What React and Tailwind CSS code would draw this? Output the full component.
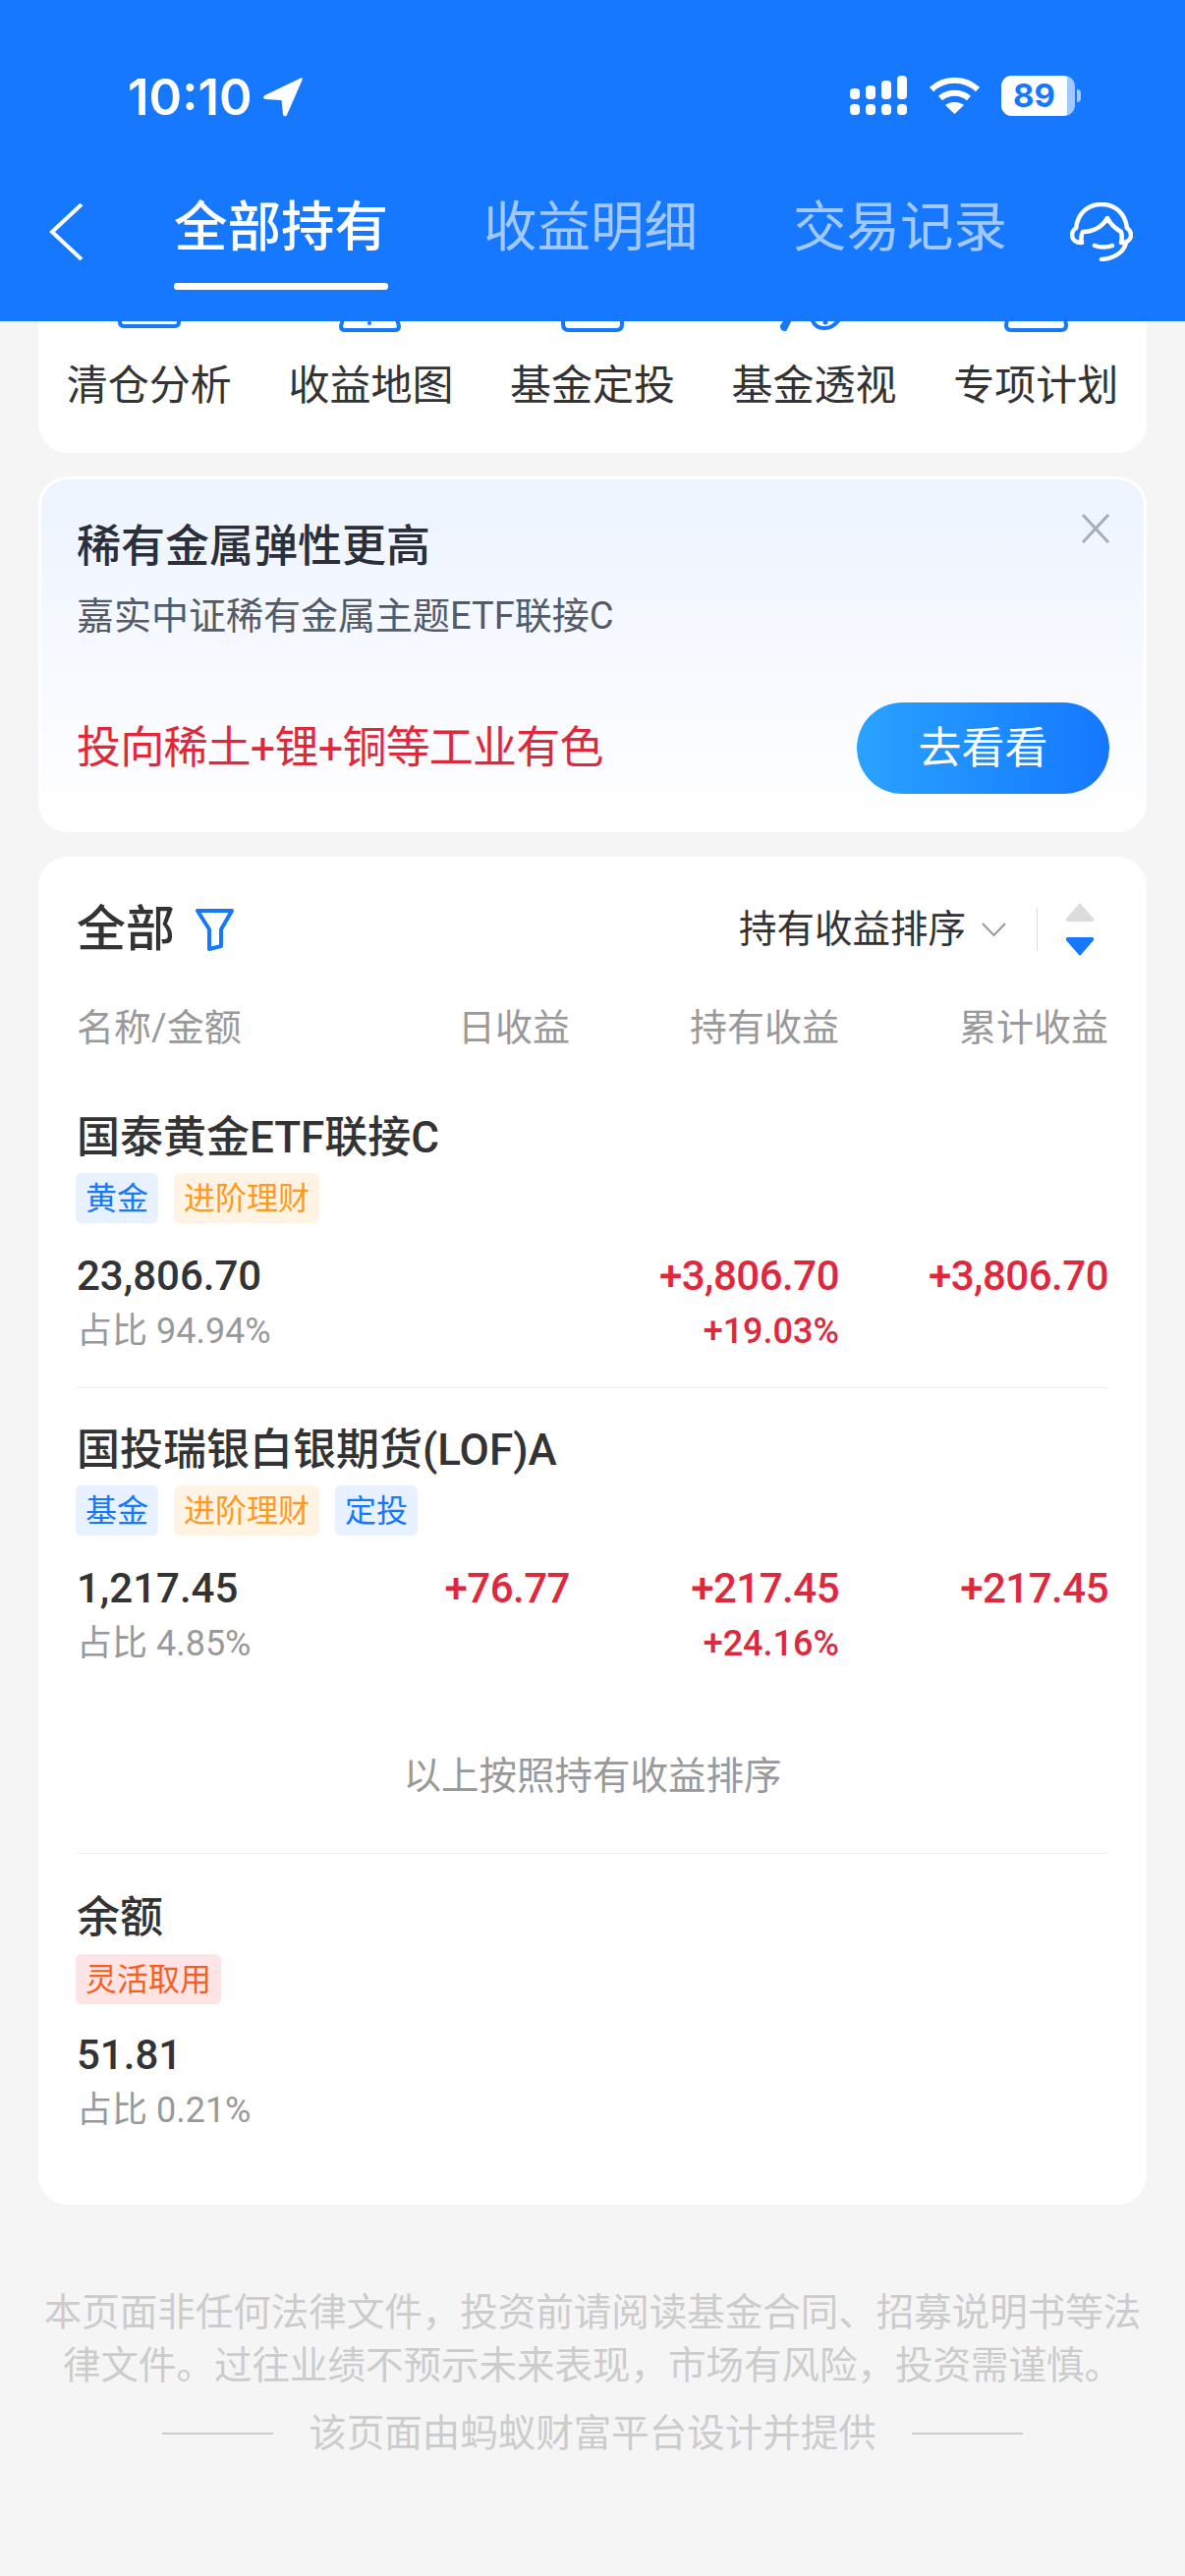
import React from 'react';

const tools = ['清仓分析', '收益地图', '基金定投', '基金透视', '专项计划'];

const holdings = [
  {
    name: '国泰黄金ETF联接C',
    tags: [['黄金', 'blue'], ['进阶理财', 'orange']],
    amount: '23,806.70',
    share: '占比 94.94%',
    day: '',
    hold: '+3,806.70',
    holdPct: '+19.03%',
    total: '+3,806.70',
  },
  {
    name: '国投瑞银白银期货(LOF)A',
    tags: [['基金', 'blue'], ['进阶理财', 'orange'], ['定投', 'blue']],
    amount: '1,217.45',
    share: '占比 4.85%',
    day: '+76.77',
    hold: '+217.45',
    holdPct: '+24.16%',
    total: '+217.45',
  },
];

function ToolStub({ index }) {
  return (
    <svg className="mx-auto block h-[11px] w-[72px]" viewBox="0 0 72 11" fill="none" stroke="#1677ff" strokeWidth="4">
      {index === 0 && <path d="M6 -2 V1 Q6 5 11 5 H61 Q66 5 66 1 V-2" />}
      {index === 1 && (
        <>
          <path d="M8 -2 L6 5 Q6 9 10 9 H61 Q65 9 65 5 L63 -2" />
          <circle cx="35" cy="2" r="2" fill="#1677ff" stroke="none" />
        </>
      )}
      {index === 2 && <path d="M6 -2 V3 Q6 9 12 9 H60 Q66 9 66 3 V-2" />}
      {index === 3 && (
        <>
          <path d="M8 -2 L3 5 Q3 8 6 8 L11 -2" />
          <path d="M33 -3 C35 4 40 7 46 7 C53 7 58 3 62 -3" />
          <circle cx="47" cy="1" r="2.5" fill="#1677ff" stroke="none" />
        </>
      )}
      {index === 4 && <path d="M7 -2 L6 4 Q6 9 11 9 H62 Q67 9 67 4 L66 -2" />}
    </svg>
  );
}

function Tag({ color, children }) {
  const styles = {
    blue: 'bg-[#e7f1ff] text-[#1677ff]',
    orange: 'bg-[#fff3e3] text-[#ff9a1f]',
    red: 'bg-[#ffe4e6] text-[#f5601e]',
  };
  return (
    <span className={`flex h-[51px] items-center rounded-[6px] px-[10px] text-[32px] leading-none ${styles[color]}`}>
      {children}
    </span>
  );
}

function Holding({ name, tags, amount, share, day, hold, holdPct, total }) {
  return (
    <div>
      <div className="h-[60px] text-[44px] font-medium leading-[62px] text-[#333333]">{name}</div>
      <div className="-ml-px mt-[7px] flex h-[51px] gap-[16px]">
        {tags.map((t) => (
          <Tag key={t[0]} color={t[1]}>{t[0]}</Tag>
        ))}
      </div>
      <div className="mt-[23px] grid h-[60px] grid-cols-[250px_252px_274px_274px] text-[42px] font-medium leading-[61px] tracking-[-0.5px] text-[#e0283c]">
        <div className="tracking-normal text-[#333333]">{amount}</div>
        <div className="text-right">{day}</div>
        <div className="text-right">{hold}</div>
        <div className="text-right">{total}</div>
      </div>
      <div className="mt-[2px] grid h-[50px] grid-cols-[502px_274px_274px] text-[36px] leading-[50px]">
        <span className="text-[#999999]">{share}</span>
        <span className="text-right font-medium text-[#e0283c]">{holdPct}</span>
      </div>
    </div>
  );
}

export default function App() {
  return (
    <div className="h-[2622px] w-[1206px] overflow-hidden bg-[#f5f5f5] font-['Roboto','Noto_Sans_CJK_SC',sans-serif]">
      {/* header */}
      <div className="h-[327px] bg-[#1677ff] text-white">
        <div className="flex h-[198px] items-start justify-between pl-[130px] pr-[106px] pt-[74px]">
          <div className="flex items-center gap-[11px]">
            <span className="font-['Inter'] text-[51px] font-semibold leading-[50px]">10:10</span>
            <svg className="h-[40px] w-[40px]" viewBox="0 0 40 40" fill="#ffffff">
              <path d="M38 0.5 C39.5 0 40 1 39.5 2.5 L24 38 C23 40 20.500 39.500 20 37.500 L18.500 23 L2 22 C0 21.500 -0.500 19 1.500 18 Z" />
            </svg>
          </div>
          <div className="flex items-center gap-[22px] pt-[2px]">
            <svg className="h-[42px] w-[60px]" viewBox="0 0 60 42" fill="#ffffff">
              <rect x="1" y="14" width="10" height="11" rx="4" />
              <rect x="17" y="11" width="10" height="14" rx="4" />
              <rect x="33" y="6" width="10" height="19" rx="4" />
              <rect x="49" y="1" width="10" height="24" rx="4" />
              <rect x="1" y="30" width="10" height="11" rx="4" />
              <rect x="17" y="30" width="10" height="11" rx="4" />
              <rect x="33" y="30" width="10" height="11" rx="4" />
              <rect x="49" y="30" width="10" height="11" rx="4" />
            </svg>
            <svg className="h-[38px] w-[51px]" viewBox="0 0 51 38" fill="none" stroke="#ffffff" strokeWidth="6">
              <path d="M2 13 C15 0.500 36 0.500 49 13" />
              <path d="M11 22 C19 15 32 15 40 22" />
              <path d="M25.500 38 L16 29 C21 25 30 25 35 29 Z" fill="#ffffff" stroke="none" />
            </svg>
            <div className="flex items-center">
              <div className="flex h-[41px] w-[75px] overflow-hidden rounded-[11px] bg-white/60">
                <div className="flex h-full w-[67px] items-center justify-center rounded-r-[3px] bg-white font-['Inter'] text-[33px] font-bold leading-none text-[#1677ff]">
                  89
                </div>
              </div>
              <div className="ml-[2px] h-[13px] w-[4px] rounded-r-full bg-white/60" />
            </div>
          </div>
        </div>
        <div className="flex items-start">
          <svg className="ml-[50px] mt-[9px] h-[58px] w-[36px]" viewBox="0 0 36 58" fill="none" stroke="#ffffff" strokeWidth="4">
            <path d="M33 1 L3 29 L33 57" />
          </svg>
          <div className="ml-[91px] flex gap-[97px] text-[54.500px] leading-[66px]">
            <div className="flex w-[218px] flex-col">
              <span className="font-medium">全部持有</span>
              <span className="mt-[24px] h-[7px] rounded-[3px] bg-white" />
            </div>
            <span className="w-[218px] text-white/60">收益明细</span>
            <span className="w-[218px] text-white/60">交易记录</span>
          </div>
          <svg className="ml-[64px] mt-[8px] h-[60px] w-[64px]" viewBox="0 0 64 60" fill="none" stroke="#ffffff" strokeWidth="4.500" strokeLinecap="round" strokeLinejoin="round">
            <path d="M6 26 C8 11 18 2 32 2 C46 2 56 11 58 26" />
            <path d="M6 26 C3 28 2 30 2 33 C2 38 6 41 12 41 C11 36 11 33 13 30 C22 30 32 26 38 16 C41 22 47 27 52 30 C53 34 53 37 52 41 C58 41 62 38 62 33 C62 30 61 28 58 26" />
            <path d="M25 44 C30 46 38 46 43 44" />
            <path d="M57 41 C55 50 46 57 32 58" />
          </svg>
        </div>
      </div>

      {/* shortcuts */}
      <div className="mx-[39px] grid grid-cols-5 rounded-b-[30px] bg-white pb-[43px]">
        {tools.map((label, i) => (
          <div key={label} className="text-center">
            <ToolStub index={i} />
            <div className="mt-[30px] h-[50px] text-[42px] leading-[50px] text-[#333333]">{label}</div>
          </div>
        ))}
      </div>

      {/* promo banner */}
      <div className="relative mx-[39px] mt-[24px] h-[362px] rounded-[30px] border-[3px] border-white bg-linear-to-b from-[#edf4fe] via-[#f6f9ff] to-white pl-[36px] pr-[35px]">
        <button className="absolute right-[34px] top-[35px]">
          <svg className="block h-[30px] w-[30px]" viewBox="0 0 30 30" fill="none" stroke="#a5adb8" strokeWidth="3">
            <path d="M2 1 L28 29 M28 1 L2 29" />
          </svg>
        </button>
        <div className="mt-[39px] h-[60px] text-[45px] font-medium leading-[60px] text-[#2a2f3a]">稀有金属弹性更高</div>
        <div className="mt-[15px] h-[50px] text-[38px] leading-[50px] text-[#555b66]">嘉实中证稀有金属主题ETF联接C</div>
        <div className="mt-[63px] flex items-center justify-between">
          <span className="text-[45px] leading-[62px] tracking-[-0.8px] text-[#e0283c]">投向稀土+锂+铜等工业有色</span>
          <span className="flex h-[93px] w-[257px] items-center justify-center rounded-full bg-linear-to-r from-[#2ba2ff] to-[#1677ff] text-[44px] leading-none text-white">
            去看看
          </span>
        </div>
      </div>

      {/* holdings */}
      <div className="mx-[39px] mt-[25px] rounded-[30px] bg-white pb-[71px] pl-[39px] pr-[39px] pt-[44px]">
        <div className="flex h-[60px] items-center">
          <span className="text-[50px] font-medium leading-[60px] text-[#333333]">全部</span>
          <svg className="ml-[20px] h-[46px] w-[42px]" viewBox="0 0 42 46" fill="none" stroke="#1677ff" strokeWidth="4" strokeLinejoin="round">
            <path d="M3 4 H38 L27 23 V40 L15 43 V23 Z" />
          </svg>
          <span className="ml-auto text-[38.500px] leading-[60px] text-[#333333]">持有收益排序</span>
          <svg className="ml-[16px] h-[14px] w-[25px]" viewBox="0 0 25 14" fill="none" stroke="#999999" strokeWidth="2">
            <path d="M1 1 L12.500 13 L24 1" />
          </svg>
          <span className="ml-[31px] h-[44px] w-[1px] bg-[#dddddd]" />
          <div className="ml-[28px] mr-[14px] flex flex-col gap-[16px]">
            <svg className="block h-[20px] w-[30px]" viewBox="0 0 30 20" fill="#dcdcdc">
              <path d="M15 1 L29 17 Q30 20 27 20 H3 Q0 20 1 17 Z" />
            </svg>
            <svg className="block h-[20px] w-[30px]" viewBox="0 0 30 20" fill="#1677ff">
              <path d="M15 19 L29 3 Q30 0 27 0 H3 Q0 0 1 3 Z" />
            </svg>
          </div>
        </div>

        <div className="mt-[45px] grid h-[50px] grid-cols-[250px_252px_274px_274px] text-[38px] leading-[50px] text-[#999999]">
          <span>名称/金额</span>
          <span className="text-right">日收益</span>
          <span className="text-right">持有收益</span>
          <span className="text-right">累计收益</span>
        </div>

        <div className="mt-[56px]">
          <Holding {...holdings[0]} />
        </div>
        <div className="mt-[32px] h-[1px] bg-[#eeeeee]" />
        <div className="mt-[32px]">
          <Holding {...holdings[1]} />
        </div>

        <div className="mt-[85px] h-[50px] text-center text-[38.500px] leading-[50px] text-[#999999]">以上按照持有收益排序</div>
        <div className="mt-[53px] h-[1px] bg-[#eeeeee]" />

        <div className="mt-[34px] h-[60px] text-[44px] font-medium leading-[62px] text-[#333333]">余额</div>
        <div className="-ml-px mt-[8px] flex h-[51px]">
          <Tag color="red">灵活取用</Tag>
        </div>
        <div className="mt-[22px] h-[60px] text-[42px] font-medium leading-[60px] text-[#333333]">51.81</div>
        <div className="mt-[1px] h-[50px] text-[36px] leading-[50px] text-[#999999]">占比 0.21%</div>
      </div>

      {/* footer */}
      <div className="mt-[83px] text-center text-[38.500px] leading-[54px] text-[#cccccc]">
        <div className="whitespace-nowrap">本页面非任何法律文件，投资前请阅读基金合同、招募说明书等法</div>
        <div className="whitespace-nowrap">律文件。过往业绩不预示未来表现，市场有风险，投资需谨慎。</div>
        <div className="mt-[15px] flex items-center justify-center gap-[36px] whitespace-nowrap">
          <span className="h-[2px] w-[113px] bg-[#cccccc]" />
          <span>该页面由蚂蚁财富平台设计并提供</span>
          <span className="h-[2px] w-[113px] bg-[#cccccc]" />
        </div>
      </div>
    </div>
  );
}
